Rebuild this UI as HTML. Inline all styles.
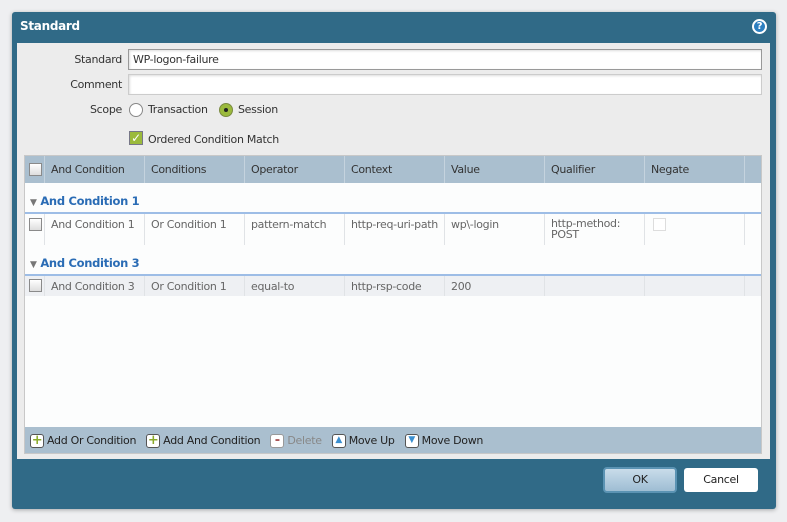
<!DOCTYPE html><html><head><style>
*{box-sizing:border-box;margin:0;padding:0}
body{width:787px;height:522px;background:#eeeff1;font-family:"DejaVu Sans","Liberation Sans",sans-serif;font-size:11px;color:#333;position:relative;overflow:hidden;letter-spacing:-0.3px}
.a{position:absolute}
.dlg{left:12px;top:12px;width:764px;height:497px;background:#306a87;border-radius:3px;box-shadow:0 1px 4px rgba(0,0,0,.3)}
.ttl{left:20px;top:19px;color:#fff;font-weight:bold;font-size:12px}
.panel{left:17px;top:43px;width:753px;height:416px;background:#ececec}
.lbl{width:105px;text-align:right}
.inp{left:128px;width:634px;height:21px;background:#fff;border:1px solid #b0b0b0;box-shadow:inset 1px 1px 2px #ddd;padding:3px 4px}
.grid{left:24px;top:155px;width:738px;height:299px;background:#fcfdfd;border:1px solid #c8c8c8}
.hdr{left:0;top:0;width:736px;height:27px;background:#aabfcf}
.col{position:absolute;top:0;height:100%;border-left:1px solid #c5d3de;padding:7px 6px}
.cb{position:absolute;width:13px;height:13px;border:1px solid #8a8a8a;background:linear-gradient(#fff,#ddd)}
.grp{color:#2a6cb5;font-weight:bold;font-size:11.5px}
.cell{position:absolute;border-left:1px solid #e0e3e6;padding:4px 6px;color:#666;height:100%}
.tb{left:0;top:271px;width:736px;height:26px;background:#aabfcf;display:flex;align-items:center;padding:1px 5px 0;color:#222;white-space:nowrap}
.tb span.it{display:flex;align-items:center;margin-right:10px}
.ic{display:inline-block;width:14px;height:14px;border:1px solid #555;border-radius:3px;background:#fff;margin-right:3px;text-align:center;line-height:11px;font-weight:bold;font-size:13px}
</style></head><body>
<div class="a dlg"></div>
<div class="a ttl">Standard</div>
<div class="a" style="left:752px;top:19px;width:15px;height:15px;border-radius:50%;background:#2d7fc0;border:2px solid #fff;color:#fff;font-size:10px;font-weight:bold;text-align:center;line-height:11px">?</div>
<div class="a panel"></div>
<div class="a lbl" style="left:17px;top:53px">Standard</div>
<div class="a inp" style="top:49px;border-color:#999">WP-logon-failure</div>
<div class="a lbl" style="left:17px;top:78px">Comment</div>
<div class="a inp" style="top:74px;border-color:#ccc"></div>
<div class="a lbl" style="left:17px;top:103px">Scope</div>
<div class="a" style="left:129px;top:103px;width:14px;height:14px;border-radius:50%;border:1px solid #888;background:#fff"></div>
<div class="a" style="left:148px;top:103px">Transaction</div>
<div class="a" style="left:219px;top:103px;width:14px;height:14px;border-radius:50%;border:1px solid #7a8a40;background:#9bba3c"><div style="margin:4px;width:4px;height:4px;border-radius:50%;background:#222"></div></div>
<div class="a" style="left:238px;top:103px">Session</div>
<div class="a" style="left:129px;top:131px;width:14px;height:14px;background:#9bba3c;border:1px solid #778;color:#fff;font-size:12px;line-height:12px;text-align:center;font-weight:bold">✓</div>
<div class="a" style="left:148px;top:133px">Ordered Condition Match</div>
<div class="a grid">
 <div class="a hdr">
  <div class="cb" style="left:4px;top:7px"></div>
  <div class="col" style="left:19px">And Condition</div>
  <div class="col" style="left:119px">Conditions</div>
  <div class="col" style="left:219px">Operator</div>
  <div class="col" style="left:319px">Context</div>
  <div class="col" style="left:419px">Value</div>
  <div class="col" style="left:519px">Qualifier</div>
  <div class="col" style="left:619px">Negate</div>
  <div class="col" style="left:719px"></div>
 </div>
 <div class="a grp" style="left:5px;top:38px"><span style="color:#777;font-size:9px">▼</span> And Condition 1</div>
 <div class="a" style="left:0;top:56px;width:736px;height:2px;background:#9dbde6"></div>
 <div class="a" style="left:0;top:58px;width:736px;height:31px">
  <div class="cb" style="left:4px;top:4px"></div>
  <div class="cell" style="left:19px">And Condition 1</div>
  <div class="cell" style="left:119px">Or Condition 1</div>
  <div class="cell" style="left:219px">pattern-match</div>
  <div class="cell" style="left:319px">http-req-uri-path</div>
  <div class="cell" style="left:419px">wp\-login</div>
  <div class="cell" style="left:519px;line-height:11px">http-method:<br>POST</div>
  <div class="cell" style="left:619px"><div class="cb" style="left:8px;top:4px;border-color:#ddd;background:#fff"></div></div>
  <div class="cell" style="left:719px"></div>
 </div>
 <div class="a grp" style="left:5px;top:100px"><span style="color:#777;font-size:9px">▼</span> And Condition 3</div>
 <div class="a" style="left:0;top:118px;width:736px;height:2px;background:#9dbde6"></div>
 <div class="a" style="left:0;top:120px;width:736px;height:20px;background:#eef0f3">
  <div class="cb" style="left:4px;top:3px"></div>
  <div class="cell" style="left:19px">And Condition 3</div>
  <div class="cell" style="left:119px">Or Condition 1</div>
  <div class="cell" style="left:219px">equal-to</div>
  <div class="cell" style="left:319px">http-rsp-code</div>
  <div class="cell" style="left:419px">200</div>
  <div class="cell" style="left:519px"></div>
  <div class="cell" style="left:619px"></div>
  <div class="cell" style="left:719px"></div>
 </div>
 <div class="a tb">
  <span class="it"><span class="ic" style="color:#8aaa2a">+</span>Add Or Condition</span>
  <span class="it"><span class="ic" style="color:#8aaa2a">+</span>Add And Condition</span>
  <span class="it" style="color:#888"><span class="ic" style="color:#a55;border-color:#999">-</span>Delete</span>
  <span class="it"><span class="ic" style="color:#3a8fd0;font-size:9px">▲</span>Move Up</span>
  <span class="it"><span class="ic" style="color:#3a8fd0;font-size:9px">▼</span>Move Down</span>
 </div>
</div>
<div class="a" style="left:603px;top:467px;width:74px;height:26px;border-radius:4px;border:2px solid #5b93b3;background:linear-gradient(#c9dcea,#9ebdd3);text-align:center;line-height:22px;color:#222">OK</div>
<div class="a" style="left:684px;top:468px;width:74px;height:24px;border-radius:3px;background:#fff;text-align:center;line-height:24px;color:#222">Cancel</div>
</body></html>
